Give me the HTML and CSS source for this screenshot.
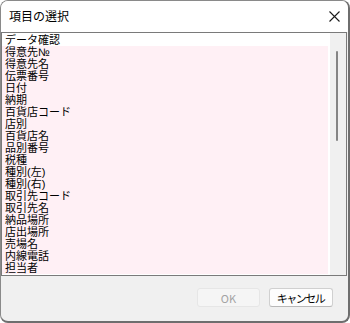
FILE: index.html
```html
<!DOCTYPE html>
<html lang="ja">
<head>
<meta charset="utf-8">
<title>項目の選択</title>
<link rel="stylesheet" href="styles.css">
</head>
<body>
<div class="window">
  <div class="titlebar">
    <span class="title">項目の選択</span>
    <svg class="close" width="11" height="11" viewBox="0 0 11 11"><path d="M0.5 0.5 L10.5 10.5 M10.5 0.5 L0.5 10.5" stroke="#1a1a1a" stroke-width="1.1" fill="none"/></svg>
  </div>
  <div class="listbox">
    <ul class="items">
      <li class="item first">データ確認</li>
      <li class="item">得意先№</li>
      <li class="item">得意先名</li>
      <li class="item">伝票番号</li>
      <li class="item">日付</li>
      <li class="item">納期</li>
      <li class="item">百貨店コード</li>
      <li class="item">店別</li>
      <li class="item">百貨店名</li>
      <li class="item">品別番号</li>
      <li class="item">税種</li>
      <li class="item">種別(左)</li>
      <li class="item">種別(右)</li>
      <li class="item">取引先コード</li>
      <li class="item">取引先名</li>
      <li class="item">納品場所</li>
      <li class="item">店出場所</li>
      <li class="item">売場名</li>
      <li class="item">内線電話</li>
      <li class="item">担当者</li>
    </ul>
    <div class="gap"></div>
    <div class="scrollbar"><div class="thumb"></div></div>
  </div>
  <div class="footer">
    <button class="btn disabled" disabled>OK</button>
    <button class="btn cancel">キャンセル</button>
  </div>
</div>
</body>
</html>
```
FILE: styles.css
```css
* { box-sizing: border-box; }
html, body { margin: 0; padding: 0; background: #ffffff; }
body {
  width: 350px;
  height: 323px;
  overflow: hidden;
  font-family: "Noto Sans CJK JP", "Noto Sans", sans-serif;
}
.window {
  width: 350px;
  height: 323px;
  border: 1px solid #8a8a8a;
  border-right: 2px solid #6e6e6e;
  border-bottom: 2px solid #6e6e6e;
  border-radius: 8px;
  background: #f0f0f0;
  display: flex;
  flex-direction: column;
  overflow: hidden;
}
.titlebar {
  height: 31px;
  flex: none;
  background: #ffffff;
  display: flex;
  align-items: center;
  justify-content: space-between;
  padding: 0 8px 0 8px;
}
.title {
  font-size: 12px;
  line-height: 12px;
  color: #000;
  margin-top: -1px;
}
.close { display: block; margin-top: -1px; }
.listbox {
  height: 244px;
  flex: none;
  margin-right: 1px;
  border: 1px solid #7a7a7a;
  background: #ffffff;
  display: flex;
}
.items {
  list-style: none;
  margin: 0;
  padding: 1px 0 0 0;
  width: 326px;
  flex: none;
}
.item {
  height: 12px;
  font-family: "Liberation Sans", "Noto Sans CJK JP", sans-serif;
  font-size: 11px;
  line-height: 12px;
  padding-left: 3px;
  color: #000;
  background: #fff0f5;
  white-space: nowrap;
}
.item.first { background: #ffffff; }
.gap { width: 2px; flex: none; background: #ffffff; }
.scrollbar {
  flex: 1;
  background: #f0f0f0;
  padding-top: 18px;
  padding-left: 6px;
}
.thumb {
  width: 2px;
  height: 90px;
  border-radius: 1px;
  background: #858585;
}
.footer {
  flex: 1;
  display: flex;
  justify-content: flex-end;
  align-items: flex-start;
  gap: 9px;
  padding: 12px 15px 0 0;
}
.btn {
  font-family: "Noto Sans CJK JP", "Noto Sans", sans-serif;
  font-size: 12px;
  line-height: 12px;
  height: 19px;
  padding: 0;
  border-radius: 3px;
  border: 1px solid #d0d0d0;
  border-bottom-color: #b8b8b8;
  background: #fdfdfd;
  color: #000;
}
.btn.disabled {
  width: 63px;
  font-size: 11px;
  background: #f5f5f5;
  border-color: #e6e6e6;
  color: #a3a3a3;
}
.btn.cancel {
  width: 64px;
  font-size: 11px;
  letter-spacing: -1.5px;
  padding-right: 1px;
}
```
